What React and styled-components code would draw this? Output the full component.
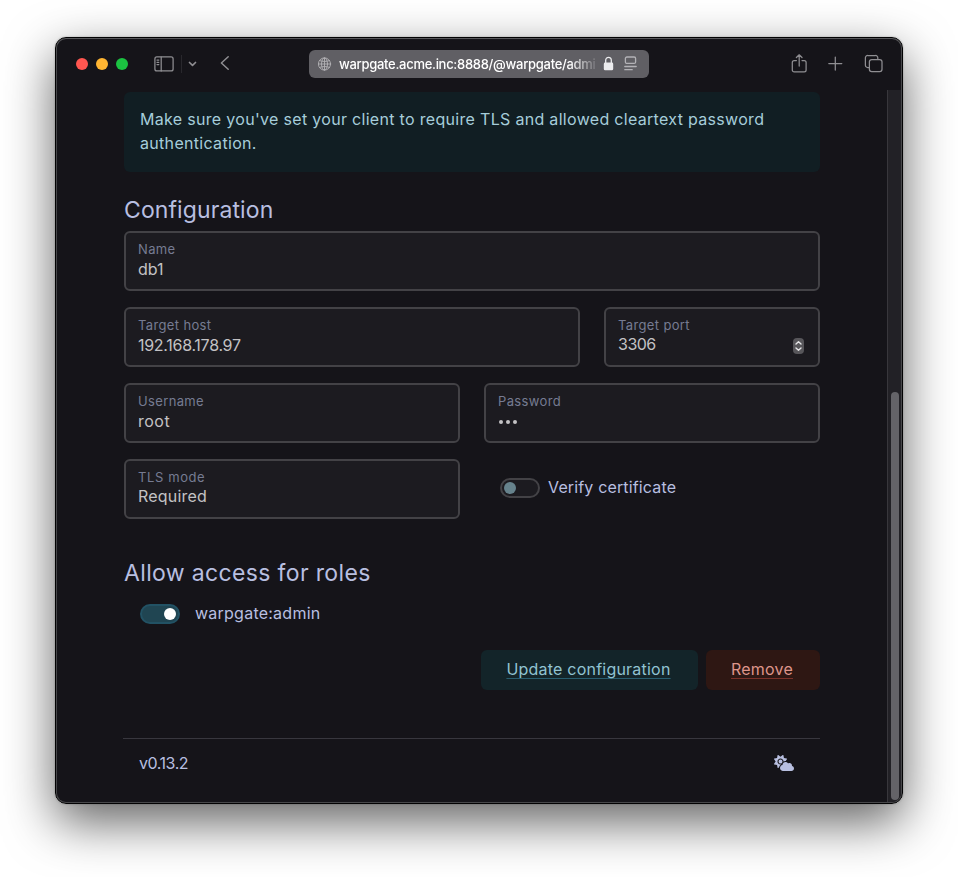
import React from 'react';
import styled, { createGlobalStyle } from 'styled-components';
import { FaCloudSun } from 'react-icons/fa6';

const GlobalStyle = createGlobalStyle`
  * { box-sizing: border-box; }
  body { margin: 0; background: #fff; overflow: hidden; }
`;

const Desktop = styled.div`
  width: 958px;
  height: 877px;
  padding: 37px 55px 73px;
  overflow: hidden;
  background: #fff;
  font-family: Inter, "Noto Sans", sans-serif;
  font-weight: 400;
`;

const Window = styled.div`
  width: 848px;
  height: 767px;
  display: flex;
  flex-direction: column;
  overflow: hidden;
  padding: 1px;
  border: 1px solid #020203;
  border-radius: 11px;
  background: linear-gradient(#57575a, #47474a 20px);
  box-shadow: 0 18px 50px rgba(0, 0, 0, 0.62), 0 0 2px rgba(0, 0, 0, 0.3);
`;

const Inner = styled.div`
  flex: 1;
  min-height: 0;
  display: flex;
  flex-direction: column;
  overflow: hidden;
  border-radius: 9px;
  background: #151419;
`;

const TitleBar = styled.header`
  height: 51px;
  flex: none;
  display: flex;
  align-items: center;
  padding: 0 18px 2px 19px;
  color: #8f8e92;
`;

const Side = styled.div`
  display: flex;
  align-items: center;
  width: ${(p) => (p.$end ? '216px' : '233px')};
  justify-content: ${(p) => (p.$end ? 'flex-end' : 'flex-start')};
  gap: ${(p) => (p.$end ? '16px' : '0')};
`;

const Lights = styled.div`
  display: flex;
  gap: 8px;
  margin-right: 26px;
`;

const Light = styled.span`
  width: 12px;
  height: 12px;
  border-radius: 50%;
  background: ${(p) => p.$color};
`;

const Glyph = styled.svg`
  flex: none;
  display: block;
  fill: none;
  stroke: currentColor;
  stroke-width: ${(p) => p.$weight || 1.25};
  stroke-linecap: round;
  stroke-linejoin: round;
`;

const Separator = styled.span`
  width: 1px;
  height: 18px;
  margin: 0 6px 0 7px;
  background: #29282d;
`;

const BackSlot = styled.span`
  margin: -2px 0 0 21px;
`;

const AddressBar = styled.div`
  width: 340px;
  height: 28px;
  display: flex;
  align-items: center;
  margin-right: auto;
  padding: 0 10px 0 8px;
  border-radius: 6px;
  background: #605f64;
  color: #b3b2b6;
`;

const Url = styled.span`
  width: 257px;
  margin: 1px 7px 0 7px;
  overflow: hidden;
  white-space: nowrap;
  font-size: 13px;
  font-weight: 500;
  line-height: 18px;
  letter-spacing: -0.29px;
  color: #fff;
  mask-image: linear-gradient(90deg, #000 230px, transparent 261px);
`;

const Lock = styled.svg`
  flex: none;
  margin-right: 10px;
  color: #ececee;
`;

const Viewport = styled.div`
  flex: 1;
  min-height: 0;
  display: flex;
`;

const Page = styled.main`
  flex: 1;
  padding: 2px 67px 0;
`;

const Scrollbar = styled.div`
  width: 14px;
  padding: 302px 2px 2px 3px;
  border-left: 1px solid #38373c;
  background: #222126;
`;

const Thumb = styled.div`
  height: 408px;
  width: 8px;
  border-radius: 4px;
  background: #646368;
`;

const Alert = styled.div`
  height: 80px;
  padding: 15px 16px;
  border-radius: 6px;
  background: #111e23;
  color: #a6cdda;
  font-size: 16px;
  line-height: 24px;
  letter-spacing: 0.31px;
  white-space: nowrap;
`;

const Heading = styled.h4`
  margin: ${(p) => p.$top}px 0 0;
  height: ${(p) => p.$height}px;
  font-size: 23px;
  font-weight: 400;
  line-height: 28px;
  letter-spacing: ${(p) => p.$track}px;
  color: #b8bfe0;
`;

const FormRow = styled.div`
  display: grid;
  grid-template-columns: ${(p) => p.$columns || '1fr'};
  column-gap: 24px;
  margin-bottom: 16px;
`;

const Field = styled.label`
  height: 60px;
  display: flex;
  flex-direction: column;
  padding: 7px 12px;
  border: 2px solid #434246;
  border-radius: 6px;
  background: #1c1b20;
`;

const Label = styled.span`
  font-size: 13px;
  line-height: 18px;
  letter-spacing: ${(p) => p.$track || 0.36}px;
  color: #767b92;
`;

const Value = styled.span`
  display: flex;
  justify-content: space-between;
  align-items: center;
  height: 20px;
  margin-top: ${(p) => p.$top ?? 1}px;
  font-size: 16px;
  line-height: 20px;
  letter-spacing: ${(p) => p.$track || 0}px;
  color: #c3c2c4;
`;

const Dots = styled.span`
  display: flex;
  gap: 3px;
  padding: 1px 0 0 1px;
`;

const Dot = styled.i`
  width: 4px;
  height: 4px;
  border-radius: 50%;
  background: #c3c2c4;
`;

const Stepper = styled.span`
  width: 11px;
  height: 16px;
  margin: 4px 2px 0 0;
  display: grid;
  place-items: center;
  border-radius: 4px;
  background: #57565a;
  color: #e4e4e6;
`;

const SwitchRow = styled.label`
  display: flex;
  align-items: center;
  gap: ${(p) => p.$gap}px;
  height: ${(p) => p.$height}px;
  padding-left: 16px;
  font-size: 16px;
  line-height: 24px;
  letter-spacing: ${(p) => p.$track}px;
  color: #b8bfe0;
`;

const SwitchText = styled.span`
  padding-bottom: 2px;
`;

const Switch = styled.span`
  width: 40px;
  height: 20px;
  display: flex;
  align-items: center;
  justify-content: ${(p) => (p.$on ? 'flex-end' : 'flex-start')};
  padding: 0 2px;
  border: 2px solid ${(p) => (p.$on ? '#225264' : '#434246')};
  border-radius: 10px;
  background: ${(p) => (p.$on ? '#204552' : '#1c1b20')};
`;

const Knob = styled.span`
  width: 12px;
  height: 12px;
  border-radius: 50%;
  background: ${(p) => (p.$on ? '#fff' : '#66828c')};
`;

const Actions = styled.div`
  display: flex;
  justify-content: flex-end;
  gap: 8px;
  margin-top: 26px;
`;

const Button = styled.button`
  width: ${(p) => p.$width}px;
  height: 40px;
  padding: 0 2px 2px 0;
  border: 0;
  border-radius: 6px;
  background: ${(p) => (p.$danger ? '#2e1713' : '#132429')};
  color: ${(p) => (p.$danger ? '#de958b' : '#91c3d2')};
  font: 400 16px/24px Inter, sans-serif;
  letter-spacing: 0.22px;
  text-decoration: underline 1px ${(p) => (p.$danger ? '#7a3129' : '#285c6e')};
  text-underline-offset: 3px;
  text-decoration-skip-ink: none;
`;

const Footer = styled.footer`
  display: flex;
  align-items: center;
  justify-content: space-between;
  height: 49px;
  margin: 48px 0 0 -1px;
  padding: 0 26px 0 16px;
  border-top: 1px solid #38373e;
  font-size: 16px;
  letter-spacing: -0.45px;
  color: #b8bfe0;
`;

const Weather = styled(FaCloudSun)`
  width: 20px;
  height: 16px;
`;

function TextField({ label, value, track, labelTrack, top, children }) {
  return (
    <Field>
      <Label $track={labelTrack}>{label}</Label>
      <Value $track={track} $top={top}>
        {value}
        {children}
      </Value>
    </Field>
  );
}

export default function App() {
  return (
    <Desktop>
      <GlobalStyle />
      <Window>
        <Inner>
          <TitleBar>
            <Side>
              <Lights>
                <Light $color="#ff5650" />
                <Light $color="#ffb532" />
                <Light $color="#1bc241" />
              </Lights>
              <Glyph width="20" height="16" viewBox="0 0 20 16">
                <rect x="0.9" y="0.9" width="18.2" height="14" rx="2" />
                <path d="M7.2 1v14M3 4h1.8M3 6.3h1.8M3 8.6h1.8" />
              </Glyph>
              <Separator />
              <Glyph width="9" height="6" viewBox="0 0 9 6" $weight={1.7}>
                <path d="M1.5 1.5l3 2.8 3-2.8" />
              </Glyph>
              <BackSlot>
                <Glyph width="12" height="16" viewBox="0 0 12 16" $weight={1.5}>
                  <path d="M10.2 1.700L3.400 8l6.800 6.300" />
                </Glyph>
              </BackSlot>
            </Side>
            <AddressBar>
              <Glyph width="15" height="14" viewBox="0 0 15 14" $weight={0.9}>
                <circle cx="7.5" cy="7" r="6.1" />
                <ellipse cx="7.5" cy="7" rx="3" ry="6.1" />
                <path d="M7.5 1v12M1.5 7h12M2.6 3.6c3 1.2 6.8 1.2 9.8 0M2.6 10.4c3-1.2 6.8-1.2 9.8 0" />
              </Glyph>
              <Url>warpgate.acme.inc:8888/@warpgate/admi</Url>
              <Lock width="11" height="15" viewBox="0 0 11 15">
                <path d="M2.7 7V4.2a2.8 2.9 0 0 1 5.6 0V7" fill="none" stroke="currentColor" strokeWidth="1.3" />
                <rect x="0.8" y="6.5" width="9.4" height="7.8" rx="1.4" fill="currentColor" />
              </Lock>
              <Glyph width="13" height="15" viewBox="0 0 13 15" $weight={1.3}>
                <rect x="1.4" y="1" width="10.2" height="6.4" rx="1.5" />
                <path d="M0.8 10.5h11.4M0.8 13.7h7.4" />
              </Glyph>
            </AddressBar>
            <Side $end>
              <Glyph width="16" height="20" viewBox="0 0 16 20">
                <path d="M5.4 6.5H3.200A1.900 1.900 0 0 0 1.300 8.400v7.600a1.900 1.900 0 0 0 1.900 1.900h10a1.900 1.900 0 0 0 1.900-1.900V8.400A1.900 1.900 0 0 0 13.200 6.500h-2.200M8.200 12V1M5.400 3.500L8.200 0.800 11 3.500" />
              </Glyph>
              <Glyph width="24" height="16" viewBox="0 0 24 16">
                <path d="M5.800 7.500h13M12.300 1v13" />
              </Glyph>
              <Glyph width="20" height="20" viewBox="0 0 20 20">
                <rect x="6.400" y="5.500" width="12.600" height="12" rx="2.300" />
                <path d="M6.200 13.500H4.800a2.300 2.300 0 0 1-2.400-2.300V3.800A2.300 2.300 0 0 1 4.800 1.500h7.600a2.300 2.300 0 0 1 2.400 2.300V5.300" />
              </Glyph>
            </Side>
          </TitleBar>
          <Viewport>
            <Page>
              <Alert>
                Make sure you've set your client to require TLS and allowed cleartext password
                <br />
                authentication.
              </Alert>
              <Heading $top={24} $height={35} $track={0.1}>Configuration</Heading>
              <FormRow>
                <TextField label="Name" value="db1" />
              </FormRow>
              <FormRow $columns="456px 216px">
                <TextField label="Target host" value="192.168.178.97" track={-0.28} />
                <TextField label="Target port" value="3306" track={-0.5} top={0}>
                  <Stepper>
                    <Glyph width="9" height="12" viewBox="0 0 9 12" $weight={1.4}>
                      <path d="M2 4l2.5-2.3L7 4M2 8l2.5 2.3L7 8" />
                    </Glyph>
                  </Stepper>
                </TextField>
              </FormRow>
              <FormRow $columns="1fr 1fr">
                <TextField label="Username" value="root" track={0.5} />
                <TextField label="Password">
                  <Dots>
                    <Dot />
                    <Dot />
                    <Dot />
                  </Dots>
                </TextField>
              </FormRow>
              <FormRow $columns="1fr 1fr">
                <TextField label="TLS mode" labelTrack={0.6} value="Required" track={0.2} top={0} />
                <SwitchRow $gap={8} $height={58} $track={0.15}>
                  <Switch>
                    <Knob />
                  </Switch>
                  <SwitchText>Verify certificate</SwitchText>
                </SwitchRow>
              </FormRow>
              <Heading $top={40} $height={45} $track={0.35}>Allow access for roles</Heading>
              <SwitchRow $gap={15} $height={20} $track={0.24}>
                <Switch $on>
                  <Knob $on />
                </Switch>
                <SwitchText>warpgate:admin</SwitchText>
              </SwitchRow>
              <Actions>
                <Button $width={217}>Update configuration</Button>
                <Button $width={114} $danger>Remove</Button>
              </Actions>
              <Footer>
                <span>v0.13.2</span>
                <Weather />
              </Footer>
            </Page>
            <Scrollbar>
              <Thumb />
            </Scrollbar>
          </Viewport>
        </Inner>
      </Window>
    </Desktop>
  );
}
